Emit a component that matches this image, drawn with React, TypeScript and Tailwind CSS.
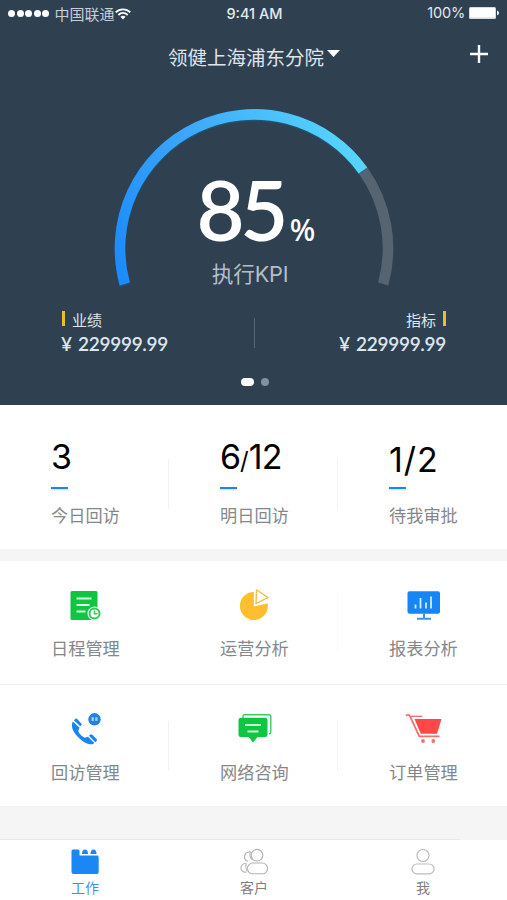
import type { ReactNode, SVGProps } from "react";

const stats = [
  { label: "今日回访", value: <span className="block leading-[30px]">3</span> },
  {
    label: "明日回访",
    value: (
      <span className="flex leading-[30px]">
        <span className="tracking-[-1px]">6</span>
        <span className="mt-[4px] text-[24px]">/</span>
        <span className="tracking-[-0.8px]">12</span>
      </span>
    ),
  },
  {
    label: "待我审批",
    value: <span className="block pt-[3px] leading-[30px] tracking-[1px]">1/2</span>,
  },
];

const menu = [
  { label: "日程管理", icon: <ScheduleIcon /> },
  { label: "运营分析", icon: <PieIcon /> },
  { label: "报表分析", icon: <ReportIcon /> },
  { label: "回访管理", icon: <PhoneIcon /> },
  { label: "网络咨询", icon: <ChatIcon /> },
  { label: "订单管理", icon: <CartIcon /> },
];

export default function App() {
  return (
    <div className="flex h-[900px] w-[507px] flex-col overflow-hidden bg-[#f5f5f5] font-['Inter','Noto_Sans_CJK_SC',sans-serif]">
      <header className="h-[405px] bg-[#2f4051] text-white">
        <StatusBar />
        <TitleBar />
        <Gauge />
        <Totals />
        <div className="mt-[22px] flex items-center justify-center gap-[7px] pl-[3px]">
          <span className="h-2 w-[13px] rounded-full bg-white" />
          <span className="size-2 rounded-full bg-[#83909d]" />
        </div>
      </header>

      <section className="grid h-[144px] grid-cols-3 bg-white">
        {stats.map((s, i) => (
          <div key={s.label} className="flex">
            <div className="flex-1 pl-[51px]">
              <div className="mt-[37px] h-[45px] text-[34px] text-black">{s.value}</div>
              <div className="h-[2px] w-[17px] bg-[#1e84ee] shadow-[0_1px_2px_#b5dcff]" />
              <Label className="mt-[15px]">{s.label}</Label>
            </div>
            {i < 2 && <Divider className="mt-[54px] h-[50px]" />}
          </div>
        ))}
      </section>

      <section className="mt-3 grid h-[245px] grid-cols-3 bg-white">
        {menu.map((m, i) => (
          <div
            key={m.label}
            className={i < 3 ? "flex h-[124px] border-b border-[#f2f2f2]" : "flex h-[121px]"}
          >
            <div className="flex-1 pl-[51px]">
              <div className="mt-[25px] flex h-[38px] w-[70px] justify-center">{m.icon}</div>
              <Label className="mt-[13px]">{m.label}</Label>
            </div>
            {i % 3 < 2 && i > 0 && (
              <Divider className={i === 1 ? "mt-[32px] h-[58px] opacity-40" : "mt-[36px] h-[50px]"} />
            )}
          </div>
        ))}
      </section>

      <div className="mt-auto h-px w-[460px] bg-[#e9e9e9]" />
      <nav className="grid h-[60px] grid-cols-3 bg-white">
        <Tab label="工作" icon={<WorkIcon />} active />
        <Tab label="客户" icon={<ClientsIcon />} />
        <Tab label="我" icon={<MeIcon />} />
      </nav>
    </div>
  );
}

function StatusBar() {
  return (
    <div className="grid h-[28px] grid-cols-3 items-center px-2 text-[#e3e8ed]">
      <div className="flex items-center">
        <div className="mb-[2px] flex gap-[1.6px]">
          {[0, 1, 2, 3, 4].map((n) => (
            <span key={n} className="size-[7px] rounded-full bg-white" />
          ))}
        </div>
        <span className="ml-[5px] mt-[1px] text-[15px] leading-5 text-[#c6ced6]">中国联通</span>
        <svg className="ml-[1px] h-[12px] w-[16px]" viewBox="0 0 16 12" fill="none" stroke="white" strokeWidth="1.8">
          <path d="M.7 4.4c4.2-4.1 10.4-4.1 14.6 0" />
          <path d="M3.3 7c2.8-2.7 6.6-2.7 9.4 0" />
          <path d="M5.5 8.8c1.5-1.3 3.5-1.3 5 0L8 11.6Z" fill="white" stroke="none" />
        </svg>
      </div>
      <span className="pl-[2px] text-center text-[14.5px] font-medium">9:41 AM</span>
      <div className="mb-[2px] flex items-center justify-end gap-1">
        <span className="text-[14.5px] tracking-[-0.2px]">100%</span>
        <svg className="h-[12px] w-[30px]" viewBox="0 0 30 12" fill="white">
          <rect width="27" height="12" rx="1.5" fill="#d5dbe1" />
          <rect x="1" y="1" width="25" height="9.5" rx="1" />
          <path d="M28 3.5q2 .7 2 2.5t-2 2.5Z" />
        </svg>
      </div>
    </div>
  );
}

function TitleBar() {
  return (
    <div className="flex h-[58px] items-center pl-[168px] pr-[19px]">
      <h1 className="mt-[2px] whitespace-nowrap text-[19.5px] leading-7 text-[#dfe5ea]">领健上海浦东分院</h1>
      <svg className="mb-[7px] ml-[3px] h-[7px] w-[13px]" viewBox="0 0 13 7" fill="white">
        <path d="M0 0h13L6.5 7Z" />
      </svg>
      <svg className="mb-[7px] ml-auto size-[18px]" viewBox="0 0 18 18" stroke="white" strokeWidth="2.4">
        <path d="M9 0v18M0 9h18" />
      </svg>
    </div>
  );
}

function Gauge() {
  return (
    <div className="relative mx-auto h-[220px] w-[300px]">
      <svg className="absolute inset-0 size-full" viewBox="104.5 86 300 220" fill="none" strokeWidth="10.6">
        <defs>
          <linearGradient id="arc" x1="125" y1="285" x2="364" y2="170" gradientUnits="userSpaceOnUse">
            <stop offset="0" stopColor="#1b8bfd" />
            <stop offset=".45" stopColor="#3ba6fb" />
            <stop offset="1" stopColor="#56d4fd" />
          </linearGradient>
        </defs>
        <path d="M363.5 170.5A134 134 0 0 1 383.7 284" stroke="#566472" />
        <path
          d="M125.3 284A134 134 0 0 1 363.5 170.5"
          stroke="#0c6a8c"
          strokeOpacity=".5"
          transform="translate(0 1.5)"
        />
        <path d="M125.3 284A134 134 0 0 1 363.5 170.5" stroke="url(#arc)" />
      </svg>
      <div className="relative pt-[81px]">
        <div className="flex h-[84px] items-baseline pl-[93px] font-['Lato',sans-serif] font-semibold leading-[84px]">
          <span className="text-[83px] tracking-[-4.5px]">85</span>
          <span className="ml-[6px] font-['Noto_Sans',sans-serif] text-[30px] font-medium">%</span>
        </div>
        <p className="mt-[8px] pr-[7px] text-center text-[21.7px] leading-[30px] tracking-[-0.2px] text-[#b4bec8]">
          执行KPI
        </p>
      </div>
    </div>
  );
}

function Totals() {
  return (
    <div className="mt-[4px] flex h-[46px] justify-between px-[61px] text-[#dde5ee]">
      <div>
        <div className="flex h-[20px] items-center gap-[7px] text-[15px]">
          <span className="mb-[3px] ml-[1px] h-[15px] w-[3px] bg-[#e8bd31]" />
          <span className="mt-[3px]">业绩</span>
        </div>
        <Amount />
      </div>
      <span className="ml-[2px] mt-[8px] h-[30px] w-px bg-[#596775]" />
      <div>
        <div className="flex h-[20px] items-center justify-end gap-[7px] text-[15px]">
          <span className="mt-[3px]">指标</span>
          <span className="mb-[3px] h-[15px] w-[3px] bg-[#e8bd31]" />
        </div>
        <Amount />
      </div>
    </div>
  );
}

function Amount() {
  return (
    <p className="flex w-[107px] justify-between font-['Lato',sans-serif] text-[19px] font-semibold leading-[27px]">
      <span>¥</span>
      <span className="tracking-[-0.3px]">229999.99</span>
    </p>
  );
}

function Label({ children, className = "" }: { children: ReactNode; className?: string }) {
  return (
    <p className={`whitespace-nowrap text-[17.2px] leading-[24px] text-[#85888b] ${className}`}>{children}</p>
  );
}

function Divider({ className }: { className: string }) {
  return <span className={`w-px bg-[#f1f1f1] ${className}`} />;
}

function Tab({ label, icon, active }: { label: string; icon: ReactNode; active?: boolean }) {
  return (
    <div className="flex flex-col items-center pl-[1px] pt-[8px]">
      <div className="h-[30px]">{icon}</div>
      <span className={active ? "text-[14px] leading-5 text-[#3b93ee]" : "text-[14px] leading-5 text-[#808080]"}>
        {label}
      </span>
    </div>
  );
}

// every menu icon shares a 38x38 box
function MenuSvg(props: SVGProps<SVGSVGElement>) {
  return <svg width="38" height="38" viewBox="0 0 38 38" fill="none" {...props} />;
}

function ScheduleIcon() {
  return (
    <MenuSvg>
      <rect x="3.5" y="5" width="27" height="29" rx="1.5" fill="#0ec641" />
      <path d="M9.5 12.5h15M9.5 19h13M9.5 25.5h9" stroke="#d5ffdf" strokeWidth="1.8" />
      <circle cx="27.5" cy="27.5" r="7" fill="white" />
      <circle cx="27.5" cy="27.5" r="5" fill="white" stroke="#2bcb58" strokeWidth="2" />
      <path d="M27.5 24.5v3.3h3" stroke="#2bcb58" strokeWidth="1.5" />
    </MenuSvg>
  );
}

function PieIcon() {
  return (
    <MenuSvg>
      <path d="M18 6a14 14 0 1 0 13.6 11.2L17.7 20.5Z" fill="#fdbf2d" />
      <path d="M20.5 3.8 32 11.5l-12 6.2Z" fill="white" stroke="#f9b944" strokeWidth="1.3" strokeLinejoin="round" />
    </MenuSvg>
  );
}

function ReportIcon() {
  return (
    <MenuSvg>
      <rect x="2.5" y="5.3" width="32.5" height="22.5" rx="2" fill="#1686f6" />
      <path d="M10.5 22.5v-4M15.5 22.5V12M21 22.5v-6M26 22.5V10.5" stroke="#d3eaff" strokeWidth="1.8" />
      <path d="M19 27.5V32M12 32.8h14" stroke="#3b95ee" strokeWidth="2" />
    </MenuSvg>
  );
}

function PhoneIcon() {
  return (
    <MenuSvg>
      <path
        d="M5.800 11.500c-2 4-.8 9.500 5.200 15.500s11 8.200 15 7l1.300-1-6.300-6.300-3.300 1c-3-1.200-5.200-3.500-6.500-6.700l1.300-3.300Z"
        fill="#1686f6"
      />
      <path
        d="m6.800 10.200 1.700-1.500q1-.6 1.800.2l4.600 5.300-1.600 2ZM22 25.800l1.500-1.300q.9-.5 1.800.3l4.500 4.400q.5.900-.2 1.700l-1.300 1.300Z"
        fill="#1686f6"
      />
      <circle cx="27.500" cy="9.300" r="6.200" fill="#1f82e8" />
      <path d="M24.600 7.300h2.200v3.800h-2.200ZM28.300 7.300h2.200v3.800h-2.200Z" fill="#a8d2ff" />
    </MenuSvg>
  );
}

function ChatIcon() {
  return (
    <MenuSvg>
      <path d="M7 8V6q0-1.300 1.500-1.300H33q1.800 0 1.800 1.800v15.500q0 1.800-2 2" stroke="#3bc962" strokeWidth="1.400" />
      <path
        d="M5 7.700h24q2.500 0 2.500 2.500v14.300q0 2.500-2.500 2.500h-7.500L17 32.500 12.800 27H5q-2.500 0-2.500-2.500V10.200q0-2.500 2.500-2.500Z"
        fill="#0ec641"
      />
      <path d="M9 15h16M11.500 21.500h11" stroke="#c6f5d2" strokeWidth="1.800" />
    </MenuSvg>
  );
}

function CartIcon() {
  return (
    <MenuSvg>
      <path d="M1 6q2.500-3 4.300.8l9 19.500h20.200" stroke="#f1706f" strokeWidth="1.800" />
      <path d="M5 6.300h12.500" stroke="#f1706f" strokeWidth="1.300" />
      <path d="M9.500 9h27L32 23.800H15.800Z" fill="#ff4847" />
      <circle cx="18" cy="31" r="1.900" fill="#f1706f" />
      <circle cx="28.300" cy="31" r="1.900" fill="#f1706f" />
    </MenuSvg>
  );
}

function WorkIcon() {
  return (
    <svg width="28" height="27" viewBox="0 0 28 27" fill="#1b87f4">
      <path d="M2 1.500h5q1.500 0 1.500 1.500v4.500H26q1.700 0 1.700 1.700V24q0 2-2 2H2.500q-2 0-2-2V3q0-1.500 1.500-1.500Z" />
      <path d="M11 6q0-4.500 3-4.500T17 6ZM19.500 6q0-4.500 3-4.500t3 4.500Z" />
    </svg>
  );
}

function ClientsIcon() {
  return (
    <svg width="28" height="27" viewBox="0 0 28 27" fill="none" stroke="#b3b3b3" strokeWidth="1.100">
      <circle cx="17" cy="7.200" r="5.800" />
      <rect x="7.500" y="15" width="20" height="10.800" rx="5.200" />
      <path d="M10.500 3.700c-4 .2-6 2.600-6 5.200 0 2 1.400 3.800 3.600 4.400M10.500 3.700q-1.800 4 1.700 8.200M6.300 15C2.800 15.600 1 17.700 1 20s1.800 4 5 4.400M6.300 15.500q-1.300 4 .7 8" />
    </svg>
  );
}

function MeIcon() {
  return (
    <svg width="24" height="27" viewBox="0 0 24 27" fill="none" stroke="#bdbdbd" strokeWidth="1.200">
      <circle cx="12" cy="7.500" r="6" />
      <rect x="1" y="16" width="22" height="9.800" rx="4.900" />
    </svg>
  );
}
